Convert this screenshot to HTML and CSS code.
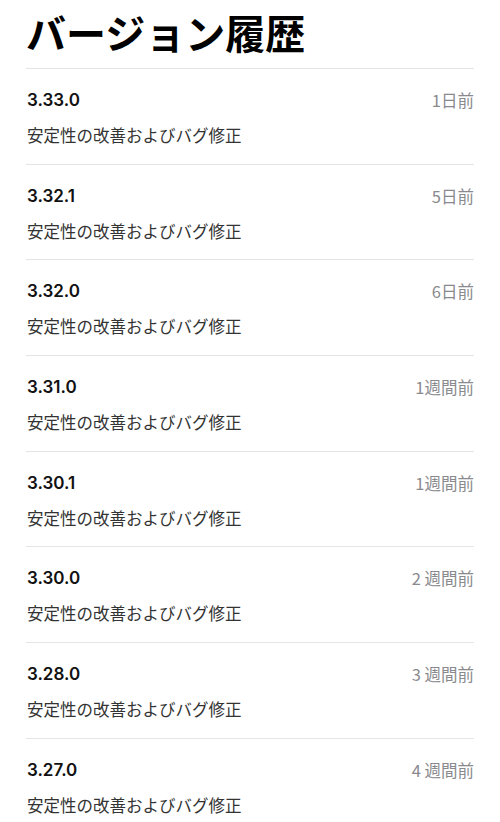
FILE: index.html
```html
<!DOCTYPE html>
<html lang="ja">
<head>
    <meta charset="UTF-8">
    <meta name="viewport" content="width=device-width, initial-scale=1.0">
    <title>バージョン履歴</title>
    <link rel="stylesheet" href="styles.css">
</head>
<body>
    <div class="page">
        <h1 class="title">バージョン履歴</h1>
        <ul class="versions">
            <li class="version">
                <div class="version-head"><span class="num">3.33.0</span><span class="date">1日前</span></div>
                <p class="notes">安定性の改善およびバグ修正</p>
            </li>
            <li class="version">
                <div class="version-head"><span class="num">3.32.1</span><span class="date">5日前</span></div>
                <p class="notes">安定性の改善およびバグ修正</p>
            </li>
            <li class="version">
                <div class="version-head"><span class="num">3.32.0</span><span class="date">6日前</span></div>
                <p class="notes">安定性の改善およびバグ修正</p>
            </li>
            <li class="version">
                <div class="version-head"><span class="num">3.31.0</span><span class="date">1週間前</span></div>
                <p class="notes">安定性の改善およびバグ修正</p>
            </li>
            <li class="version">
                <div class="version-head"><span class="num">3.30.1</span><span class="date">1週間前</span></div>
                <p class="notes">安定性の改善およびバグ修正</p>
            </li>
            <li class="version">
                <div class="version-head"><span class="num">3.30.0</span><span class="date">2 週間前</span></div>
                <p class="notes">安定性の改善およびバグ修正</p>
            </li>
            <li class="version">
                <div class="version-head"><span class="num">3.28.0</span><span class="date">3 週間前</span></div>
                <p class="notes">安定性の改善およびバグ修正</p>
            </li>
            <li class="version">
                <div class="version-head"><span class="num">3.27.0</span><span class="date">4 週間前</span></div>
                <p class="notes">安定性の改善およびバグ修正</p>
            </li>
        </ul>
    </div>
</body>
</html>
```
FILE: styles.css
```css
body {
    margin: 0;
    background-color: white;
    font-family: Inter, "Noto Sans CJK JP", sans-serif;
    color: #111;
}
.page {
    padding: 0 26px;
}
.title {
    margin: 0;
    padding-top: 8px;
    height: 60px;
    font-family: "Noto Sans CJK JP", sans-serif;
    font-size: 40px;
    line-height: 48px;
    font-weight: 700;
    color: #000;
}
.versions {
    list-style: none;
    margin: 0;
    padding: 0;
}
.version {
    border-top: 1px solid #e4e4e4;
    padding: 19px 0 16.7px 1px;
}
.version-head {
    display: flex;
    justify-content: space-between;
    align-items: center;
    height: 24px;
}
.num {
    font-size: 17px;
    font-weight: 600;
    color: #111;
}
.date {
    font-family: "Noto Sans CJK JP", sans-serif;
    font-size: 16.5px;
    color: #8a8a8e;
}
.notes {
    margin: 11px 0 0 0;
    font-family: "Noto Sans CJK JP", sans-serif;
    font-size: 16.5px;
    line-height: 24px;
    color: #333;
}
```
